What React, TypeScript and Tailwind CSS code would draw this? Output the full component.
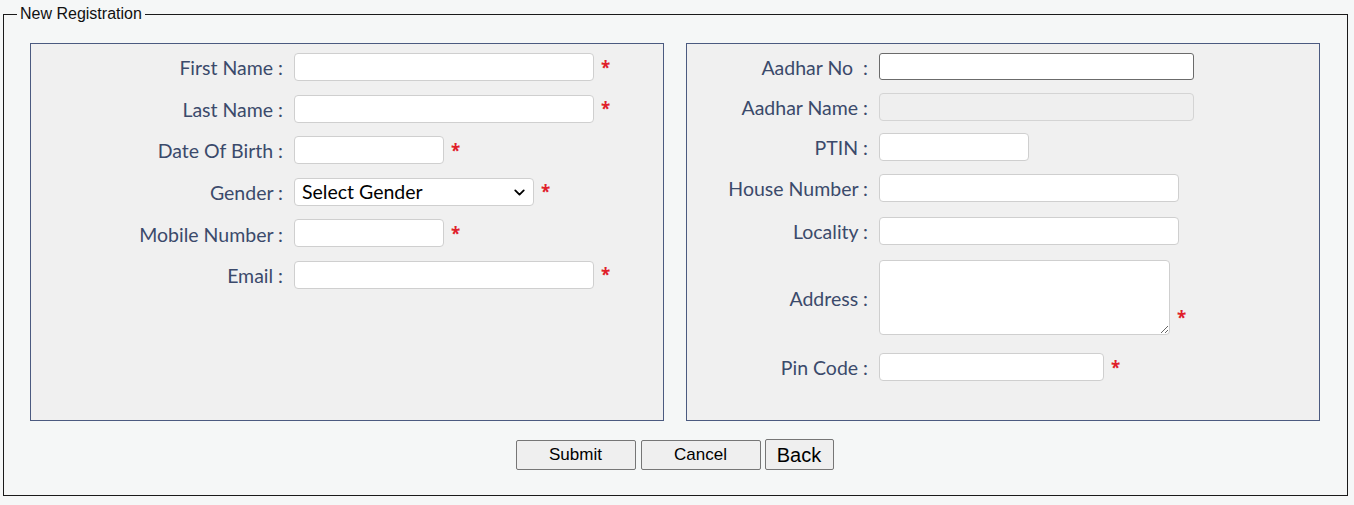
import { ChevronDown } from 'lucide-react';

const labelFont = { fontFamily: 'Lato, "Open Sans", sans-serif' };

function Star({ className = '' }: { className?: string }) {
  return <span className={`ml-[7px] text-[17px] font-bold leading-none text-[#e0202a] ${className}`}>*</span>;
}

function Label({ text, w }: { text: string; w: string }) {
  return (
    <label className={`${w} shrink-0 whitespace-pre pr-[11px] pt-[2px] text-right text-[19.5px] leading-none text-[#3b4a6b]`} style={labelFont}>
      {text}
    </label>
  );
}

const inputCls = 'h-[28px] rounded-[4px] border border-[#cfcfcf] bg-white px-2 text-[16px] outline-none';

export default function App() {
  return (
    <div className="min-h-[505px] bg-[#f5f7f7] pt-[3px] pl-[3px] pr-[6px] pb-[9px]">
      <fieldset className="border border-[#1a1a1a] px-[26px] pt-[18px] pb-[25px]">
        <legend className="-ml-[13px] px-[3px] text-[16px] leading-[22px] text-[#111]" style={{ fontFamily: '"Liberation Sans", Arial, sans-serif' }}>
          New Registration
        </legend>
        <div className="flex gap-[22px]">
          {/* left panel */}
          <div className="flex h-[378px] w-[634px] flex-col gap-[13.6px] border border-[#4b5a80] bg-[#f0f0f0] pt-[9px]">
            <div className="flex items-center">
              <Label text="First Name :" w="w-[263px]" />
              <input className={`${inputCls} w-[300px]`} />
              <Star />
            </div>
            <div className="flex items-center">
              <Label text="Last Name :" w="w-[263px]" />
              <input className={`${inputCls} w-[300px]`} />
              <Star />
            </div>
            <div className="flex items-center">
              <Label text="Date Of Birth :" w="w-[263px]" />
              <input className={`${inputCls} w-[150px]`} />
              <Star />
            </div>
            <div className="flex items-center">
              <Label text="Gender :" w="w-[263px]" />
              <div className="relative">
                <select
                  className="h-[28px] w-[240px] appearance-none rounded-[4px] border border-[#cfcfcf] bg-white pl-[7px] text-[19.5px] leading-none text-black outline-none"
                  style={labelFont}
                  defaultValue=""
                >
                  <option value="">Select Gender</option>
                  <option value="M">Male</option>
                  <option value="F">Female</option>
                </select>
                <ChevronDown className="pointer-events-none absolute right-[6px] top-[6px] h-[17px] w-[17px] text-black" strokeWidth={2.6} />
              </div>
              <Star />
            </div>
            <div className="flex items-center">
              <Label text="Mobile Number :" w="w-[263px]" />
              <input className={`${inputCls} w-[150px]`} />
              <Star />
            </div>
            <div className="flex items-center">
              <Label text="Email :" w="w-[263px]" />
              <input className={`${inputCls} w-[300px]`} />
              <Star />
            </div>
          </div>

          {/* right panel */}
          <div className="flex h-[378px] w-[634px] flex-col border border-[#4b5a80] bg-[#f0f0f0] pt-[9px]">
            <div className="flex items-center">
              <Label text={'Aadhar No  :'} w="w-[192px]" />
              <input className="h-[27px] w-[315px] rounded-[3px] border border-[#6b6b6b] bg-white px-2 outline-none" />
            </div>
            <div className="mt-[13px] flex items-center">
              <Label text="Aadhar Name :" w="w-[192px]" />
              <input disabled className="h-[28px] w-[315px] rounded-[4px] border border-[#d4d4d4] bg-[#efefef] px-2" />
            </div>
            <div className="mt-[12px] flex items-center">
              <Label text="PTIN :" w="w-[192px]" />
              <input className={`${inputCls} w-[150px]`} />
            </div>
            <div className="mt-[13px] flex items-center">
              <Label text="House Number :" w="w-[192px]" />
              <input className={`${inputCls} w-[300px]`} />
            </div>
            <div className="mt-[15px] flex items-center">
              <Label text="Locality :" w="w-[192px]" />
              <input className={`${inputCls} w-[300px]`} />
            </div>
            <div className="mt-[15px] flex items-center">
              <Label text="Address :" w="w-[192px]" />
              <textarea className="h-[75px] w-[291px] rounded-[4px] border border-[#cfcfcf] bg-white px-2 outline-none" />
              <Star className="mt-[40px]" />
            </div>
            <div className="mt-[18px] flex items-center">
              <Label text="Pin Code :" w="w-[192px]" />
              <input className={`${inputCls} w-[225px]`} />
              <Star />
            </div>
          </div>
        </div>

        <div className="mt-[18px] flex items-end justify-center gap-[5px] pr-[2px]" style={{ fontFamily: '"Liberation Sans", Arial, sans-serif' }}>
          <button className="h-[30px] w-[120px] rounded-[2px] border border-[#767676] bg-[#efefef] text-[17px] text-black">Submit</button>
          <button className="h-[30px] w-[120px] rounded-[2px] border border-[#767676] bg-[#efefef] text-[17px] text-black">Cancel</button>
          <button className="-ml-[1px] h-[31px] w-[69px] rounded-[2px] border border-[#767676] bg-[#efefef] text-[20px] text-black">Back</button>
        </div>
      </fieldset>
    </div>
  );
}
